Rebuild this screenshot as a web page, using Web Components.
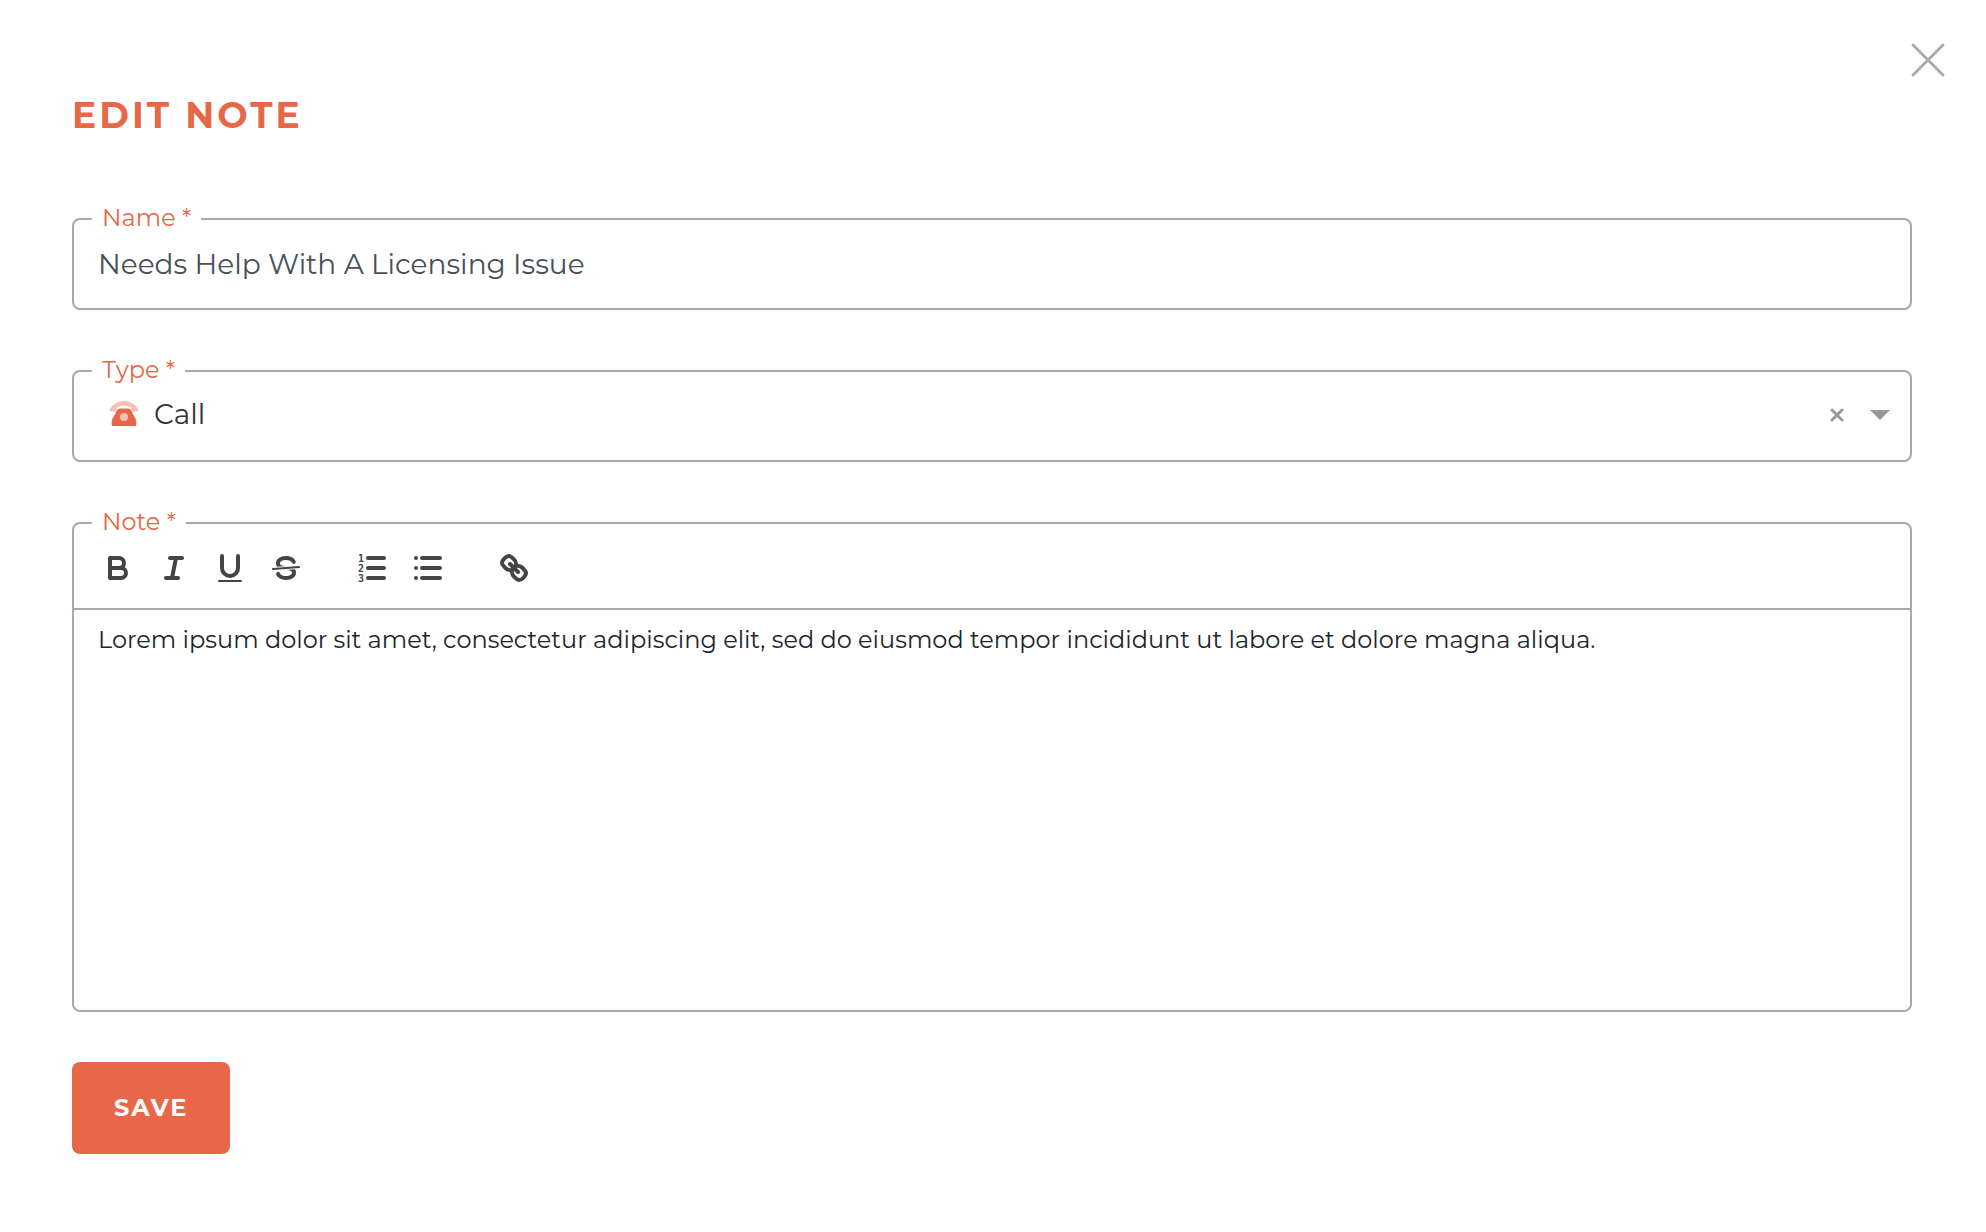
<!DOCTYPE html>
<html lang="en">
<head>
<meta charset="utf-8">
<meta name="viewport" content="width=device-width, initial-scale=1">
<title>Edit Note</title>
<style>
  body {
    margin: 0;
    background-color: #fff;
    font-family: Montserrat, Inter, sans-serif;
    --accent: #e66848;
    --line: #a4acaa;
  }
</style>
</head>
<body>

<note-dialog heading="Edit Note">
  <text-field label="Name" value="Needs Help With A Licensing Issue"></text-field>
  <select-field label="Type" value="Call"></select-field>
  <note-editor label="Note">Lorem ipsum dolor sit amet, consectetur adipiscing elit, sed do eiusmod tempor incididunt ut labore et dolore magna aliqua.</note-editor>
  <save-button slot="actions">Save</save-button>
</note-dialog>

<script>
// outlined box with the label sitting on its top border
const fieldStyle = `
  :host {
    display: block;
  }
  * {
    box-sizing: border-box;
  }
  .field {
    position: relative;
    border: 2px solid var(--line);
    border-radius: 8px;
  }
  label {
    position: absolute;
    top: -18px;
    left: 18px;
    padding: 0 10px;
    background-color: #fff;
    color: var(--accent);
    font-size: 24px;
    line-height: 32px;
  }
  input, select, textarea, button {
    margin: 0;
    border: none;
    outline: none;
    background: none;
    font-family: inherit;
  }
  button {
    cursor: pointer;
  }
  svg {
    display: block;
  }
`;

class NoteDialog extends HTMLElement {

  constructor() {
    super();
    this.shadowDOM = this.attachShadow({mode: 'open'});
  }

  connectedCallback() {
    this.render();
  }

  render() {
    this.shadowDOM.innerHTML = `
      <style>
        :host {
          display: block;
        }
        header {
          display: flex;
          justify-content: flex-end;
          padding: 42px 40px 0 0;
        }
        .close {
          padding: 0;
          border: none;
          background: none;
          cursor: pointer;
        }
        .close svg {
          display: block;
        }
        form {
          display: flex;
          flex-direction: column;
          gap: 60px;
          padding: 0 74px 78px 72px;
        }
        h1 {
          margin: 15px 0 21px;
          color: var(--accent);
          font-size: 36px;
          line-height: 44px;
          font-weight: 700;
          letter-spacing: 3px;
          text-transform: uppercase;
        }
        footer {
          margin-top: -10px;
        }
      </style>

      <header>
        <button class="close" type="button" aria-label="Close">
          <svg width="36" height="36" viewBox="0 0 36 36" fill="none" stroke="#aaaca6" stroke-width="3" stroke-linecap="round">
            <path d="M3 3l30 30M33 3L3 33"/>
          </svg>
        </button>
      </header>
      <form>
        <h1>${this.getAttribute('heading')}</h1>
        <slot></slot>
        <footer><slot name="actions"></slot></footer>
      </form>
    `;
  }
}

customElements.define('note-dialog', NoteDialog);


class TextField extends HTMLElement {

  constructor() {
    super();
    this.shadowDOM = this.attachShadow({mode: 'open'});
  }

  connectedCallback() {
    this.render();
  }

  get value() {
    return this.shadowDOM.querySelector('#textElement').value;
  }

  render() {
    this.shadowDOM.innerHTML = `
      <style>
        ${fieldStyle}
        input {
          display: block;
          width: 100%;
          height: 88px;
          padding: 0 24px;
          color: #495057;
          font-size: 28px;
        }
      </style>

      <div class="field">
        <label for="textElement">${this.getAttribute('label')} *</label>
        <input id="textElement" type="text" value="${this.getAttribute('value')}" required>
      </div>
    `;
  }
}

customElements.define('text-field', TextField);


class SelectField extends HTMLElement {

  constructor() {
    super();
    this.shadowDOM = this.attachShadow({mode: 'open'});
  }

  connectedCallback() {
    this.render();
  }

  get value() {
    return this.shadowDOM.querySelector('#selectElement').value;
  }

  render() {
    this.shadowDOM.innerHTML = `
      <style>
        ${fieldStyle}
        .field {
          display: flex;
          align-items: center;
          height: 92px;
          padding: 0 20px 4px 36px;
        }
        select {
          flex: 1;
          min-width: 0;
          height: 60px;
          padding: 0 16px;
          appearance: none;
          color: #333;
          font-size: 28px;
        }
        .clear {
          padding: 10px 8px 8px;
          margin-right: 18px;
        }
        .arrow {
          margin-top: 2px;
          pointer-events: none;
        }
      </style>

      <div class="field">
        <label for="selectElement">${this.getAttribute('label')} *</label>
        <svg width="28" height="26" viewBox="0 0 28 26" aria-hidden="true">
          <path fill="#f5c0b2" d="M0 8C3 3 8 0 14 0s11 3 14 8v1.500q0 1-1 1h-4.500q-1 0-1.200-1l-.6-3.500Q14 2.800 7.300 6l-.6 3.500q-.2 1-1.200 1H1q-1 0-1-1z"/>
          <path fill="#e66848" d="M10 7.500h8q2 0 3 1.800l4.600 8.700q.8 1.500.8 3v2.500q0 1.500-1.500 1.500H3.100q-1.500 0-1.500-1.500V21q0-1.500.8-3L7 9.300q1-1.800 3-1.800z"/>
          <circle cx="14" cy="16" r="4" fill="#f5c0b2"/>
        </svg>
        <select id="selectElement" required>
          <option>${this.getAttribute('value')}</option>
        </select>
        <button class="clear" type="button" aria-label="Clear">
          <svg width="14" height="14" viewBox="0 0 14 14" fill="none" stroke="#999" stroke-width="3" stroke-linecap="round">
            <path d="M2 2l10 10M12 2L2 12"/>
          </svg>
        </button>
        <svg class="arrow" width="20" height="10" viewBox="0 0 20 10" aria-hidden="true">
          <path fill="#999" d="M0 0h20L10 10z"/>
        </svg>
      </div>
    `;
  }
}

customElements.define('select-field', SelectField);


class NoteEditor extends HTMLElement {

  constructor() {
    super();
    this.shadowDOM = this.attachShadow({mode: 'open'});
  }

  connectedCallback() {
    this.render();
  }

  get value() {
    return this.shadowDOM.querySelector('#noteElement').value;
  }

  render() {
    this.shadowDOM.innerHTML = `
      <style>
        ${fieldStyle}
        .toolbar {
          display: flex;
          flex-wrap: wrap;
          gap: 30px;
          padding: 20px 16px 16px;
          border-bottom: 2px solid var(--line);
        }
        .group {
          display: flex;
        }
        .toolbar button {
          padding: 6px 10px;
        }
        .toolbar svg {
          width: 36px;
          height: 36px;
          fill: none;
          stroke: #444;
          stroke-width: 2;
          stroke-linecap: round;
          stroke-linejoin: round;
        }
        .toolbar .fill {
          fill: #444;
          stroke: none;
        }
        .toolbar .thin {
          stroke-width: 1;
        }
        .toolbar .thick {
          stroke-width: 4;
        }
        .toolbar text {
          fill: #444;
          stroke: none;
          font-family: "DejaVu Sans Mono", monospace;
          font-size: 10px;
          font-weight: 700;
        }
        textarea {
          display: block;
          width: 100%;
          height: 400px;
          padding: 13px 24px;
          color: #212529;
          font-size: 24px;
          line-height: 34px;
          resize: none;
        }
      </style>

      <div class="field">
        <label for="noteElement">${this.getAttribute('label')} *</label>
        <div class="toolbar" role="toolbar">
          <div class="group">
            <button type="button" aria-label="Bold">
              <svg viewBox="0 0 18 18">
                <path d="M5 4H9.500A2.500 2.500 0 0 1 12 6.500A2.500 2.500 0 0 1 9.500 9H5Z"/>
                <path d="M5 9H10.500A2.500 2.500 0 0 1 13 11.500A2.500 2.500 0 0 1 10.500 14H5Z"/>
              </svg>
            </button>
            <button type="button" aria-label="Italic">
              <svg viewBox="0 0 18 18"><path d="M7 4H13M5 14H11M8 14L10 4"/></svg>
            </button>
            <button type="button" aria-label="Underline">
              <svg viewBox="0 0 18 18">
                <path d="M5 3V9a4 4 0 0 0 8 0V3"/>
                <rect class="fill" x="3" y="15" width="12" height="1" rx="0.5"/>
              </svg>
            </button>
            <button type="button" aria-label="Strikethrough">
              <svg viewBox="0 0 18 18">
                <path class="thin" d="M15.500 8.500L2.500 9.500"/>
                <path class="fill" d="M9.007 8C6.542 7.791 6 7.519 6 6.500C6 5.792 7.283 5 9 5c1.571 0 2.765.679 2.969 1.309a1 1 0 0 0 1.900-.617C13.356 4.106 11.354 3 9 3C6.200 3 4 4.538 4 6.500a3.200 3.200 0 0 0 .5 1.843Z"/>
                <path class="fill" d="M8.984 10C11.457 10.208 12 10.479 12 11.500c0 .708-1.283 1.500-3 1.500c-1.571 0-2.765-.679-2.969-1.309a1 1 0 1 0-1.900.617C4.644 13.894 6.646 15 9 15c2.800 0 5-1.538 5-3.500a3.200 3.200 0 0 0-.5-1.843Z"/>
              </svg>
            </button>
          </div>
          <div class="group">
            <button type="button" aria-label="Numbered list">
              <svg viewBox="0 0 36 36">
                <path class="thick" d="M14 8H30M14 18H30M14 28H30"/>
                <text x="4" y="12">1</text>
                <text x="4" y="22">2</text>
                <text x="4" y="32">3</text>
              </svg>
            </button>
            <button type="button" aria-label="Bulleted list">
              <svg viewBox="0 0 18 18"><path d="M6 4H15M6 9H15M6 14H15M3 4H3M3 9H3M3 14H3"/></svg>
            </button>
          </div>
          <div class="group">
            <button type="button" aria-label="Link">
              <svg viewBox="0 0 18 18">
                <path d="M7 7L11 11"/>
                <path d="M8.900 4.577a3.476 3.476 0 0 1 .36 4.679A3.476 3.476 0 0 1 4.577 8.900C3.185 7.500 2.035 6.400 4.217 4.217S7.500 3.185 8.900 4.577Z"/>
                <path d="M13.423 9.100a3.476 3.476 0 0 0-4.679-.36a3.476 3.476 0 0 0 .36 4.679c1.392 1.392 2.500 2.542 4.679.36S14.815 10.500 13.423 9.100Z"/>
              </svg>
            </button>
          </div>
        </div>
        <textarea id="noteElement" spellcheck="false" required>${this.textContent.trim()}</textarea>
      </div>
    `;
  }
}

customElements.define('note-editor', NoteEditor);


class SaveButton extends HTMLElement {

  constructor() {
    super();
    this.shadowDOM = this.attachShadow({mode: 'open'});
  }

  connectedCallback() {
    this.render();
  }

  render() {
    this.shadowDOM.innerHTML = `
      <style>
        :host {
          display: block;
        }
        button {
          display: block;
          padding: 30px 42px;
          border: none;
          border-radius: 8px;
          background-color: var(--accent);
          color: #fff;
          font-family: inherit;
          font-size: 24px;
          line-height: 32px;
          font-weight: 700;
          letter-spacing: 2px;
          text-transform: uppercase;
          cursor: pointer;
        }
      </style>

      <button type="submit"><slot></slot></button>
    `;
  }
}

customElements.define('save-button', SaveButton);
</script>
</body>
</html>
